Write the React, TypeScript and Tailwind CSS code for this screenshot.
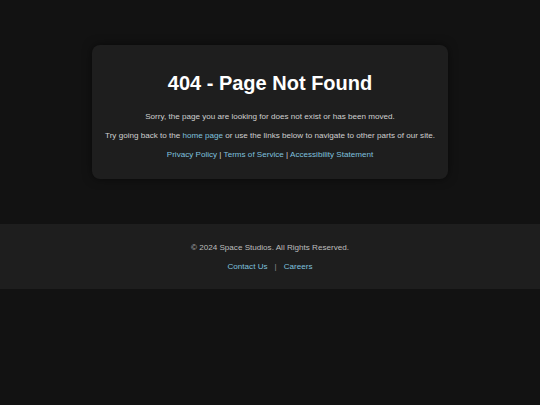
import React from 'react';

const linkClass = 'text-[#7ec0df] no-underline';

export default function App() {
  return (
    <div className="min-h-[405px] bg-[#121212] text-[#cfcfcf] font-['Liberation_Sans',Arial,sans-serif]">
      {/* Main */}
      <main className="py-[45px]">
        <div className="mx-auto w-[356px] rounded-lg bg-[#1e1e1e] pt-[26px] pb-[18px] text-center shadow-[0_0_10px_rgba(0,0,0,0.5)]">
          <h1 className="text-[20px] leading-[24px] font-bold text-white">404 - Page Not Found</h1>
          <p className="mt-[16px] text-[8.1px] leading-[12px]">
            Sorry, the page you are looking for does not exist or has been moved.
          </p>
          <p className="mt-[7px] text-[8.1px] leading-[12px]">
            Try going back to the <a href="#" className={linkClass}>home page</a> or use the links below to navigate to other parts of our site.
          </p>
          <p className="mt-[7px] text-[8.1px] leading-[12px]">
            <a href="#" className={linkClass}>Privacy Policy</a> | <a href="#" className={linkClass}>Terms of Service</a> | <a href="#" className={linkClass}>Accessibility Statement</a>
          </p>
        </div>
      </main>

      {/* Footer */}
      <footer className="bg-[#1e1e1e] pt-[18px] pb-[16px] text-center text-[8.1px] leading-[12px] text-[#bdbdbd]">
        <p>© 2024 Space Studios. All Rights Reserved.</p>
        <p className="mt-[7px]">
          <a href="#" className={linkClass}>Contact Us</a>
          <span className="mx-[7px] text-[#8a8a8a]">|</span>
          <a href="#" className={linkClass}>Careers</a>
        </p>
      </footer>
    </div>
  );
}
